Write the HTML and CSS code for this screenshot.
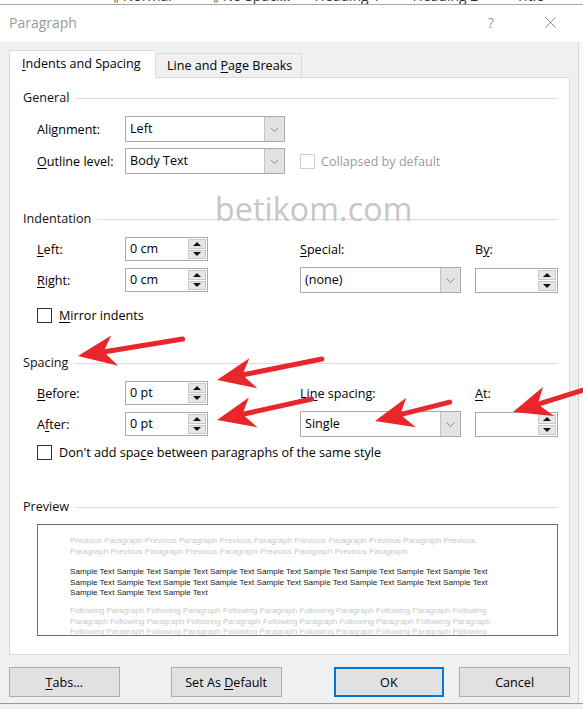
FILE: index.html
```html
<!DOCTYPE html>
<html lang="en">
<head>
    <meta charset="UTF-8">
    <title>Paragraph</title>
    <link rel="stylesheet" href="styles.css">
</head>
<body>
    <div class="ribbon">
        <span class="r1">¶ Normal</span>
        <span class="r2">¶ No Spaci...</span>
        <span class="r3">Heading 1</span>
        <span class="r4">Heading 2</span>
        <span class="r5">Title</span>
        <span class="r6">Subtitle</span>
    </div>

    <div class="window">
        <div class="titlebar">
            <span class="title">Paragraph</span>
            <span class="help">?</span>
            <svg class="close" width="11" height="11" viewBox="0 0 11 11">
                <path d="M0.5 0.5 L10.5 10.5 M10.5 0.5 L0.5 10.5" stroke="#8a8a8a" stroke-width="1" fill="none"/>
            </svg>
        </div>

        <div class="content">
            <div class="tabs">
                <div class="tab active"><u>I</u>ndents and Spacing</div>
                <div class="tab">Line and <u>P</u>age Breaks</div>
            </div>

            <div class="panel">
                <div class="group-title">General</div>
                <div class="grid-general">
                    <span class="lbl">Ali<u>g</u>nment:</span>
                    <div class="select"><span class="val">Left</span><span class="drop"><svg width="9" height="5"><polyline points="0.5,0.5 4.5,4.5 8.5,0.5" fill="none" stroke="#8c8c8c"/></svg></span></div>
                    <span></span>
                    <span></span>
                    <span class="lbl"><u>O</u>utline level:</span>
                    <div class="select"><span class="val">Body Text</span><span class="drop"><svg width="9" height="5"><polyline points="0.5,0.5 4.5,4.5 8.5,0.5" fill="none" stroke="#8c8c8c"/></svg></span></div>
                    <span></span>
                    <div class="check disabled"><span class="box"></span>Collapsed by default</div>
                </div>

                <div class="group-title gap-indent">Indentation</div>
                <div class="grid-fields">
                    <span class="lbl"><u>L</u>eft:</span>
                    <div class="spin"><span class="val">0 cm</span><span class="spin-btns"><span class="up"></span><span class="down"></span></span></div>
                    <span></span>
                    <span class="lbl"><u>S</u>pecial:</span>
                    <span></span>
                    <span class="lbl">B<u>y</u>:</span>

                    <span class="lbl"><u>R</u>ight:</span>
                    <div class="spin"><span class="val">0 cm</span><span class="spin-btns"><span class="up"></span><span class="down"></span></span></div>
                    <span></span>
                    <div class="select"><span class="val">(none)</span><span class="drop"><svg width="9" height="5"><polyline points="0.5,0.5 4.5,4.5 8.5,0.5" fill="none" stroke="#8c8c8c"/></svg></span></div>
                    <span></span>
                    <div class="spin tall"><span class="val"></span><span class="spin-btns"><span class="up"></span><span class="down"></span></span></div>
                </div>
                <div class="check row-mirror"><span class="box"></span><span><u>M</u>irror indents</span></div>

                <div class="group-title gap-spacing">Spacing</div>
                <div class="grid-fields">
                    <span class="lbl"><u>B</u>efore:</span>
                    <div class="spin"><span class="val">0 pt</span><span class="spin-btns"><span class="up"></span><span class="down"></span></span></div>
                    <span></span>
                    <span class="lbl">Li<u>n</u>e spacing:</span>
                    <span></span>
                    <span class="lbl"><u>A</u>t:</span>

                    <span class="lbl">A<u>f</u>ter:</span>
                    <div class="spin"><span class="val">0 pt</span><span class="spin-btns"><span class="up"></span><span class="down"></span></span></div>
                    <span></span>
                    <div class="select"><span class="val">Single</span><span class="drop"><svg width="9" height="5"><polyline points="0.5,0.5 4.5,4.5 8.5,0.5" fill="none" stroke="#8c8c8c"/></svg></span></div>
                    <span></span>
                    <div class="spin tall"><span class="val"></span><span class="spin-btns"><span class="up"></span><span class="down"></span></span></div>
                </div>
                <div class="check row-dontadd"><span class="box"></span><span>Don't add spa<u>c</u>e between paragraphs of the same style</span></div>

                <div class="group-title gap-preview">Preview</div>
                <div class="preview">
                    <p class="ghost prev">Previous Paragraph Previous Paragraph Previous Paragraph Previous Paragraph Previous Paragraph Previous<br>Paragraph Previous Paragraph Previous Paragraph Previous Paragraph Previous Paragraph</p>
                    <p class="sample">Sample Text Sample Text Sample Text Sample Text Sample Text Sample Text Sample Text Sample Text Sample Text<br>Sample Text Sample Text Sample Text Sample Text Sample Text Sample Text Sample Text Sample Text Sample Text<br>Sample Text Sample Text Sample Text</p>
                    <p class="ghost">Following Paragraph Following Paragraph Following Paragraph Following Paragraph Following Paragraph Following<br>Paragraph Following Paragraph Following Paragraph Following Paragraph Following Paragraph Following Paragraph<br>Following Paragraph Following Paragraph Following Paragraph Following Paragraph Following Paragraph Following</p>
                </div>
            </div>

            <div class="buttons">
                <button class="btn"><u>T</u>abs...</button>
                <button class="btn b-default">Set As <u>D</u>efault</button>
                <button class="btn b-ok">OK</button>
                <button class="btn b-cancel">Cancel</button>
            </div>
        </div>

        <div class="watermark">betikom.com</div>
    </div>

    <!-- red annotation arrows drawn over the dialog -->
    <svg class="arrows" width="583" height="709" viewBox="0 0 583 709">
        <g fill="#e8262b" stroke="#e8262b">
            <g transform="translate(78,356) rotate(-9.2)">
                <line x1="24" y1="0" x2="106" y2="0" stroke-width="5" stroke-linecap="round"/>
                <polygon points="0,0 36,-15 26,0 38,16" stroke="none"/>
            </g>
            <g transform="translate(217,380) rotate(-11.3)">
                <line x1="24" y1="0" x2="107" y2="0" stroke-width="5" stroke-linecap="round"/>
                <polygon points="0,0 36,-15 26,0 38,16" stroke="none"/>
            </g>
            <g transform="translate(217,420) rotate(-12.5)">
                <line x1="24" y1="0" x2="97" y2="0" stroke-width="5" stroke-linecap="round"/>
                <polygon points="0,0 36,-15 26,0 38,16" stroke="none"/>
            </g>
            <g transform="translate(375,421) rotate(-14.2)">
                <line x1="24" y1="0" x2="77" y2="0" stroke-width="5" stroke-linecap="round"/>
                <polygon points="0,0 36,-15 26,0 38,16" stroke="none"/>
            </g>
            <g transform="translate(513,412) rotate(-17.3)">
                <line x1="24" y1="0" x2="90" y2="0" stroke-width="5" stroke-linecap="round"/>
                <polygon points="0,0 36,-15 26,0 38,16" stroke="none"/>
            </g>
        </g>
    </svg>
</body>
</html>
```

FILE: styles.css
```css
* {
    box-sizing: border-box;
}

body {
    margin: 0;
    width: 583px;
    height: 709px;
    overflow: hidden;
    position: relative;
    background: #f0f0f0;
    font-family: "Open Sans", "Noto Sans", sans-serif;
    font-size: 12.6px;
    color: #000;
}

u {
    text-decoration-thickness: 1px;
    text-underline-offset: 2px;
}

/* strip of the word ribbon peeking above the dialog */
.ribbon {
    height: 5px;
    overflow: hidden;
    background: #fff;
    border-bottom: 1px solid #a8a8a8;
    display: flex;
    padding-left: 110px;
}
.ribbon span {
    font-size: 14px;
    line-height: 14px;
    margin-top: -11px;
    color: #333;
    white-space: nowrap;
}
.ribbon .r2 { margin-left: 38px; }
.ribbon .r3 { margin-left: 24px; }
.ribbon .r4 { margin-left: 32px; }
.ribbon .r5 { margin-left: 38px; }
.ribbon .r6 { margin-left: 40px; }

.window {
    position: relative;
    height: 699px;
    border-bottom: 1px solid #9a9a9a;
    box-shadow: inset -4px 0 0 #f7f7f7, inset -5px 0 0 #d4d4d4;
}

.titlebar {
    height: 37px;
    background: #fff;
    display: flex;
    align-items: center;
    padding: 0 0 3px 9px;
}
.title {
    flex: 1;
    font-size: 14px;
    color: #9b9b9b;
}
.help {
    font-size: 14px;
    color: #9b9b9b;
    margin-right: 51px;
}
.close {
    margin-right: 27px;
}

.content {
    padding: 8px 13px 0 9px;
}

.tabs {
    display: flex;
    align-items: flex-end;
    height: 27px;
    position: relative;
    z-index: 1;
}
.tab {
    width: 147px;
    height: 24px;
    padding-left: 11px;
    line-height: 23px;
    background: #f0f0f0;
    border: 1px solid #d9d9d9;
    border-bottom: none;
    white-space: nowrap;
}
.tab.active {
    width: 146px;
    height: 28px;
    margin-bottom: -1px;
    padding-left: 12px;
    line-height: 26px;
    background: #fff;
    border-right: none;
}

.panel {
    height: 578px;
    background: #fff;
    border: 1px solid #d9d9d9;
    padding: 12px 11px 0 13px;
    overflow: hidden;
}

.group-title {
    display: flex;
    align-items: center;
    height: 16px;
    line-height: 16px;
    gap: 6px;
    color: #111;
}
.group-title::after {
    content: "";
    flex: 1;
    border-top: 1px solid #dcdcdc;
    margin-top: 1px;
}
.gap-indent { margin-top: 37px; }
.gap-spacing { margin-top: 32px; }
.gap-preview { margin-top: 39px; }

.lbl {
    white-space: nowrap;
}

.grid-general {
    display: grid;
    grid-template-columns: 88px 160px 15px 1fr;
    grid-auto-rows: 26px;
    row-gap: 6px;
    align-items: center;
    margin: 10px 0 0 14px;
}

.grid-fields {
    display: grid;
    grid-template-columns: 88px 83px 92px 161px 14px 83px;
    grid-template-rows: 24px 26px;
    row-gap: 6px;
    align-items: center;
    margin: 10px 0 0 14px;
}

.select {
    display: flex;
    height: 26px;
    border: 1px solid #a9a9a9;
    background: #fff;
}
.select .val {
    flex: 1;
    padding-left: 4px;
    line-height: 24px;
}
.select .drop {
    width: 20px;
    background: #e3e3e3;
    border-left: 1px solid #c4c4c4;
    display: flex;
    align-items: center;
    justify-content: center;
}

.spin {
    display: flex;
    height: 24px;
    border: 1px solid #a9a9a9;
    background: #fff;
}
.spin.tall {
    height: 25px;
}
.spin .val {
    flex: 1;
    padding-left: 4px;
    line-height: 22px;
}
.spin-btns {
    width: 20px;
    display: flex;
    flex-direction: column;
    padding: 1px;
    gap: 1px;
}
.spin-btns span {
    flex: 1;
    background: #e6e6e6;
    border: 1px solid #c9c9c9;
    display: flex;
    align-items: center;
    justify-content: center;
}
.spin-btns .up::after {
    content: "";
    border-left: 4px solid transparent;
    border-right: 4px solid transparent;
    border-bottom: 4px solid #111;
}
.spin-btns .down::after {
    content: "";
    border-left: 4px solid transparent;
    border-right: 4px solid transparent;
    border-top: 4px solid #111;
}

.check {
    display: flex;
    align-items: center;
    gap: 7px;
    height: 16px;
    white-space: nowrap;
}
.check .box {
    width: 15px;
    height: 15px;
    border: 1px solid #333;
    background: #fff;
}
.check.disabled {
    color: #9a9a9a;
    gap: 6px;
}
.check.disabled .box {
    border-color: #cfcfcf;
}
.row-mirror {
    margin: 14px 0 0 14px;
}
.row-dontadd {
    margin: 7px 0 0 14px;
}

.preview {
    height: 112px;
    margin: 9px 0 0 14px;
    border: 1px solid #6e6e6e;
    padding: 11px 0 0 32px;
    overflow: hidden;
    font-family: "Liberation Sans", Arial, sans-serif;
    font-size: 8.1px;
    line-height: 10.6px;
    white-space: nowrap;
}
.preview p {
    margin: 0 0 10px;
}
.preview .ghost {
    color: #c8c8c8;
}
.preview .prev {
    letter-spacing: 0.05px;
}
.preview .sample {
    color: #222;
    margin-bottom: 7px;
}

.buttons {
    display: flex;
    margin-top: 12px;
}
.btn {
    width: 111px;
    height: 30px;
    padding: 0;
    background: #e1e1e1;
    border: 1px solid #adadad;
    font: inherit;
    color: #000;
}
.b-default { margin-left: 51px; }
.b-ok {
    margin-left: 52px;
    border: 2px solid #0078d7;
}
.b-cancel { margin-left: 15px; }

.watermark {
    position: absolute;
    left: 215px;
    top: 182px;
    font-size: 32px;
    color: #c6c6c6;
    letter-spacing: 0.2px;
}

.arrows {
    position: absolute;
    left: 0;
    top: 0;
    pointer-events: none;
}
```
